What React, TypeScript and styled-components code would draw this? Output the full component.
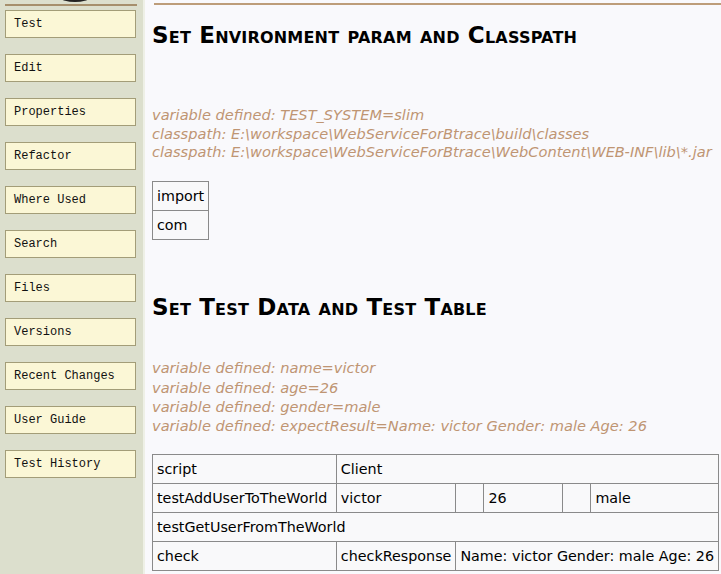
import React from "react";
import styled, { createGlobalStyle } from "styled-components";

const Global = createGlobalStyle`
  html, body { margin: 0; padding: 0; background: #f9f9fc; }
  #root { min-height: 574px; }
`;

const Page = styled.div`
  display: flex;
  min-height: 574px;
  width: 721px;
  overflow: hidden;
`;

const Sidebar = styled.nav`
  width: 143px;
  flex: none;
  background: #dcdfcd;
  display: flex;
  flex-direction: column;
`;

const SideTop = styled.div`
  position: relative;
  height: 4px;
  margin: 0 6px 4px 5px;
  border-bottom: 2px solid #a68f6c;
`;

const LogoTail = styled.div`
  position: absolute;
  left: 56px;
  top: -6px;
  width: 28px;
  height: 8px;
  border-radius: 50%;
  background: #222;
`;

const NavList = styled.div`
  display: flex;
  flex-direction: column;
  gap: 16px;
  padding-left: 5px;
`;

const NavButton = styled.a`
  box-sizing: border-box;
  width: 131px;
  height: 28px;
  display: flex;
  align-items: center;
  padding-left: 8px;
  background: #fbf7d6;
  border: 1px solid #a39d78;
  font-family: "Liberation Mono", "DejaVu Sans Mono", monospace;
  font-size: 12px;
  color: #111;
  text-decoration: none;
`;

const Main = styled.main`
  flex: 1;
  background: #f9f9fc;
  border-left: 2px solid #eef0e6;
  padding: 0 0 0 7px;
`;

const TopRule = styled.div`
  height: 3px;
  border-bottom: 2px solid #bd9d7a;
  margin-left: 2px;
`;

const Heading = styled.h2<{ $top: number }>`
  margin: ${(p) => p.$top}px 0 0 0;
  font-family: "DejaVu Sans", Verdana, sans-serif;
  font-weight: bold;
  font-variant: small-caps;
  font-size: 23px;
  line-height: 28px;
  color: #000;
  letter-spacing: 0.2px;
`;

const Notes = styled.div<{ $top: number; $lh: number }>`
  margin-top: ${(p) => p.$top}px;
  font-family: "DejaVu Sans", sans-serif;
  font-style: italic;
  font-size: 14.6px;
  line-height: ${(p) => p.$lh}px;
  color: #bf9573;
`;

const Table = styled.table<{ $top: number; $width?: number }>`
  margin-top: ${(p) => p.$top}px;
  border-collapse: collapse;
  background: #f9f9fa;
  ${(p) => (p.$width ? `width: ${p.$width}px;` : "")}
  font-family: "DejaVu Sans", sans-serif;
  font-size: 14.3px;
  color: #000;
`;

const Cell = styled.td<{ $w?: number }>`
  border: 1px solid #8a8a8a;
  height: 29px;
  padding: 0 4px;
  box-sizing: border-box;
  white-space: nowrap;
  ${(p) => (p.$w ? `width: ${p.$w}px;` : "")}
`;

const navItems = [
  "Test",
  "Edit",
  "Properties",
  "Refactor",
  "Where Used",
  "Search",
  "Files",
  "Versions",
  "Recent Changes",
  "User Guide",
  "Test History",
];

export default function App() {
  return (
    <>
      <Global />
      <Page>
        <Sidebar>
          <SideTop>
            <LogoTail />
          </SideTop>
          <NavList>
            {navItems.map((n) => (
              <NavButton key={n} href="#">
                {n}
              </NavButton>
            ))}
          </NavList>
        </Sidebar>
        <Main>
          <TopRule />
          <Heading $top={16}>Set Environment param and Classpath</Heading>
          <Notes $top={57} $lh={18.7}>
            <div>variable defined: TEST_SYSTEM=slim</div>
            <div>classpath: E:\workspace\WebServiceForBtrace\build\classes</div>
            <div>classpath: E:\workspace\WebServiceForBtrace\WebContent\WEB-INF\lib\*.jar</div>
          </Notes>
          <Table $top={19}>
            <tbody>
              <tr>
                <Cell>import</Cell>
              </tr>
              <tr>
                <Cell>com</Cell>
              </tr>
            </tbody>
          </Table>
          <Heading $top={53}>Set Test Data and Test Table</Heading>
          <Notes $top={37} $lh={19.4}>
            <div>variable defined: name=victor</div>
            <div>variable defined: age=26</div>
            <div>variable defined: gender=male</div>
            <div>variable defined: expectResult=Name: victor Gender: male Age: 26</div>
          </Notes>
          <Table $top={18} $width={567}>
            <tbody>
              <tr>
                <Cell $w={184}>script</Cell>
                <Cell colSpan={5}>Client</Cell>
              </tr>
              <tr>
                <Cell>testAddUserToTheWorld</Cell>
                <Cell $w={118}>victor</Cell>
                <Cell $w={28}></Cell>
                <Cell $w={79}>26</Cell>
                <Cell $w={28}></Cell>
                <Cell>male</Cell>
              </tr>
              <tr>
                <Cell colSpan={6}>testGetUserFromTheWorld</Cell>
              </tr>
              <tr>
                <Cell>check</Cell>
                <Cell>checkResponse</Cell>
                <Cell colSpan={4}>Name: victor Gender: male Age: 26</Cell>
              </tr>
            </tbody>
          </Table>
        </Main>
      </Page>
    </>
  );
}
